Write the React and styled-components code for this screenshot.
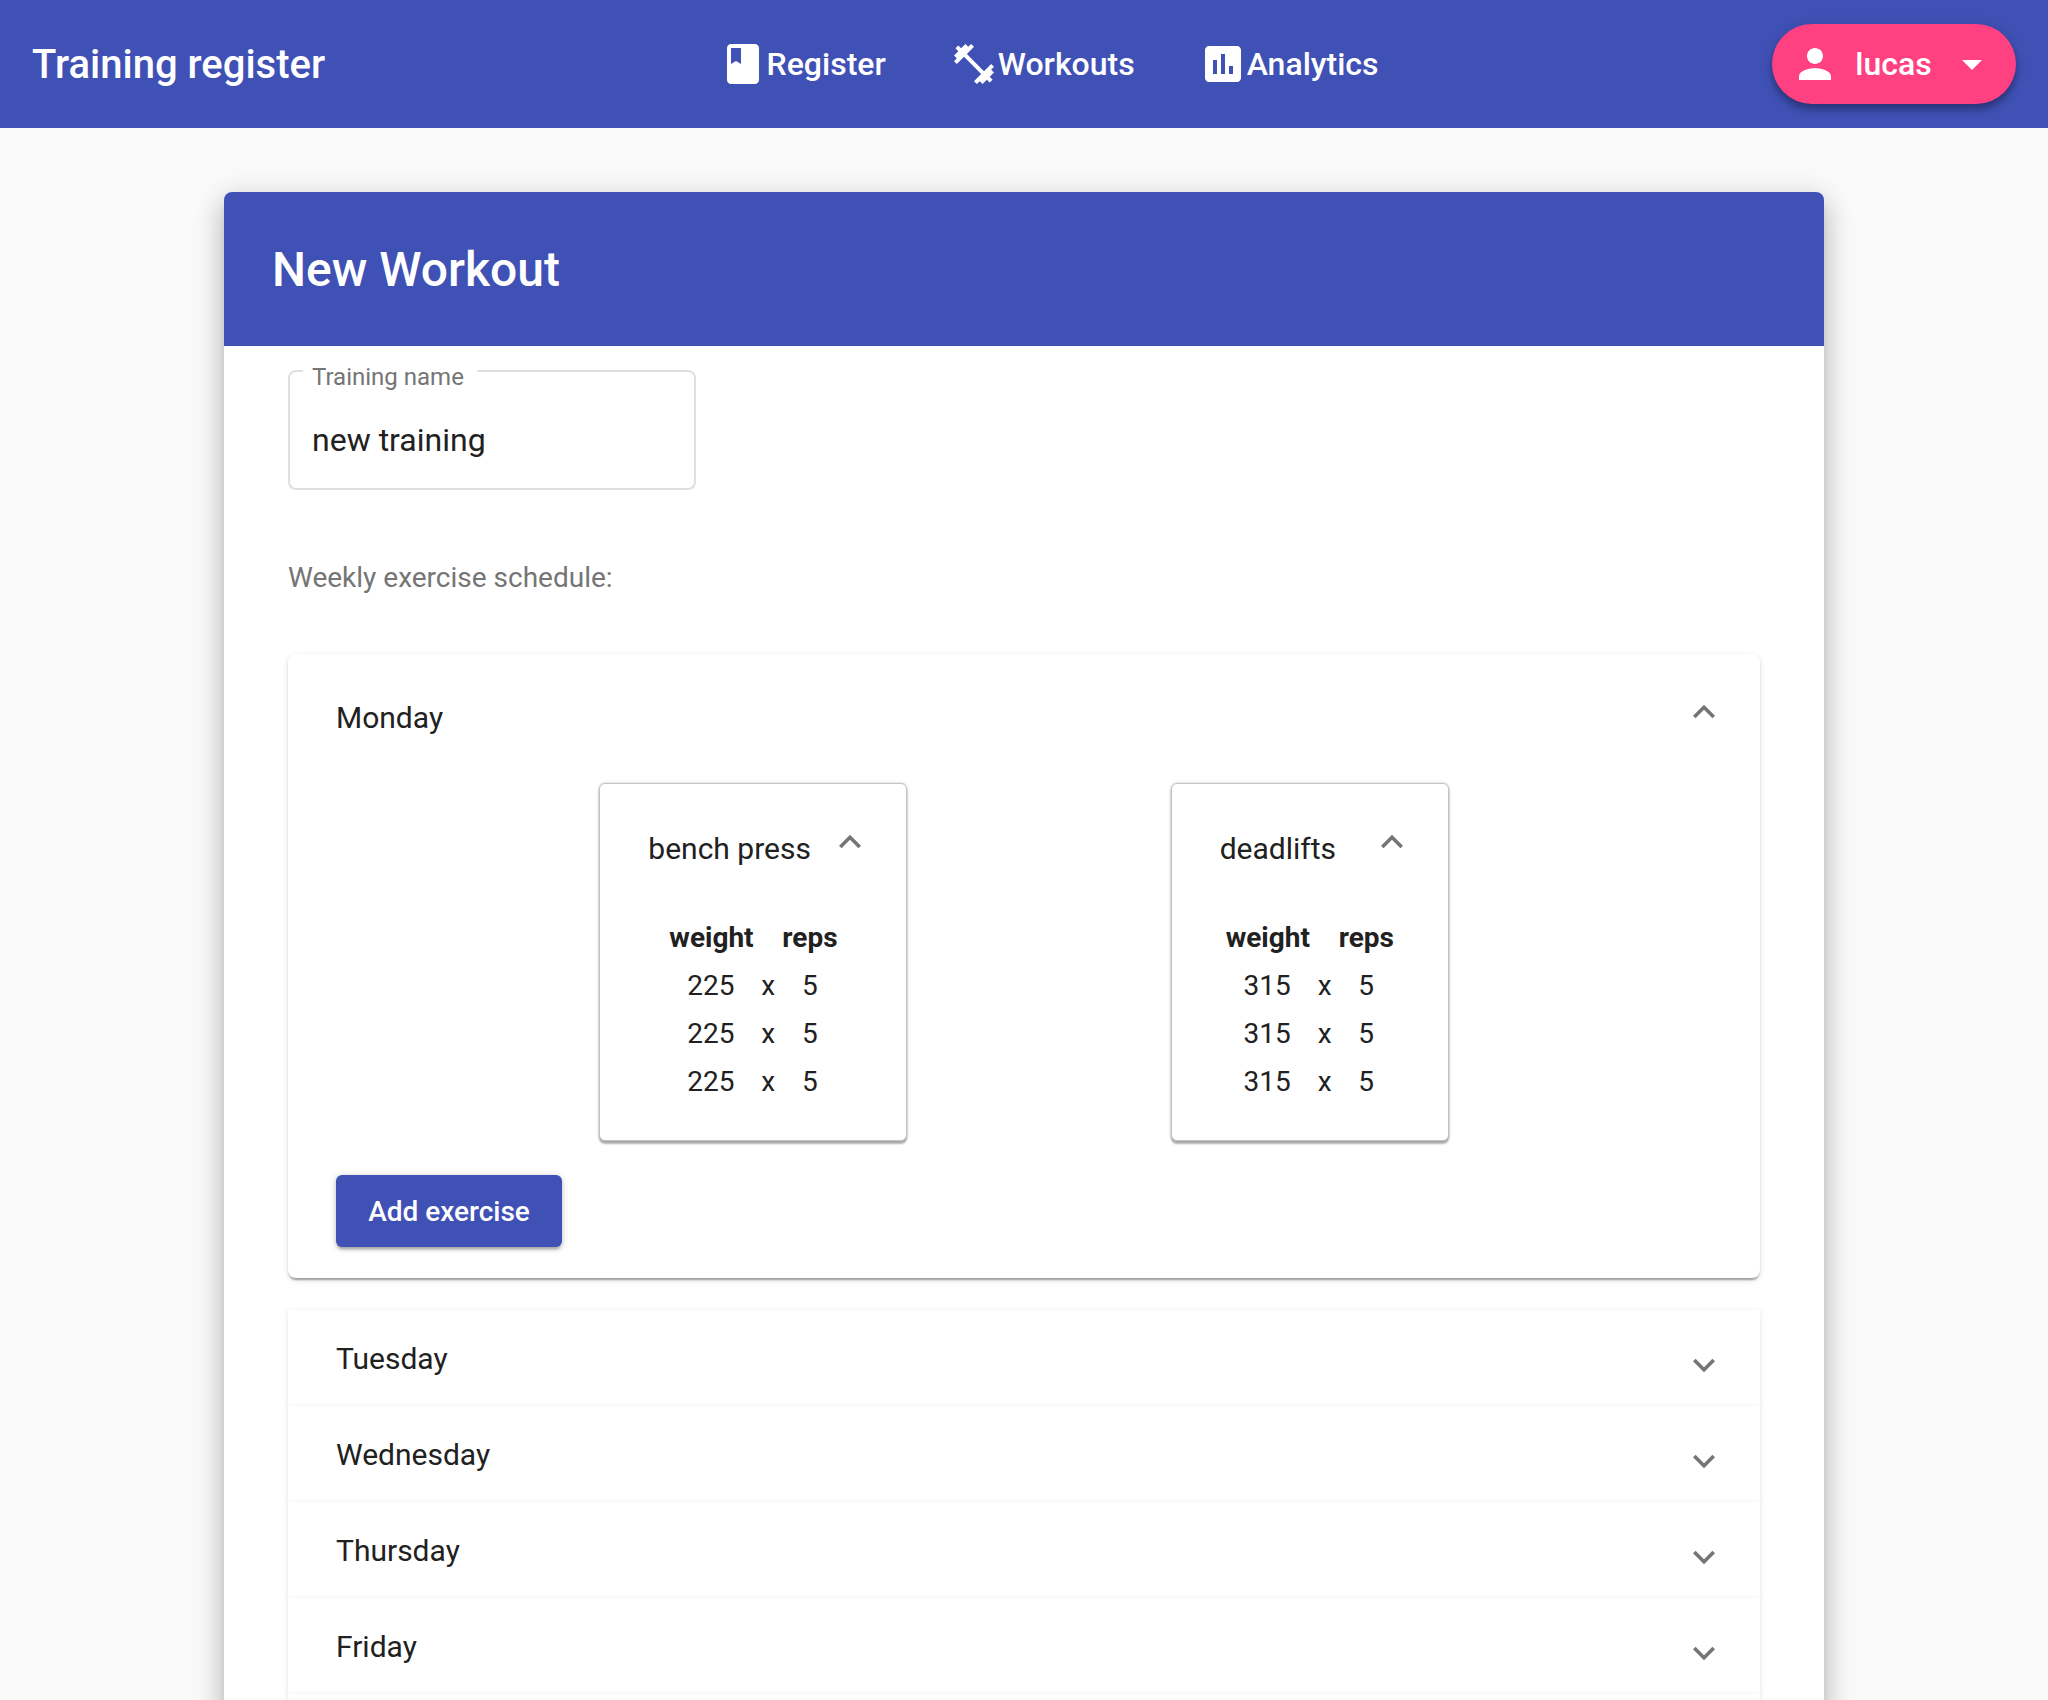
import { Fragment } from "react";
import styled, { createGlobalStyle } from "styled-components";

const GlobalStyle = createGlobalStyle`
  html, body {
    margin: 0;
    height: 100%;
    overflow: hidden;
    background: #fafafa;
    font-family: Roboto, "Liberation Sans", sans-serif;
    color: #212121;
  }
`;

/* --- navbar --- */
const Navbar = styled.header`
  height: 128px;
  padding: 0 32px;
  background: #3f51b5;
  color: #fff;
  display: flex;
  align-items: center;
  justify-content: space-between;
  box-sizing: border-box;
`;

const Brand = styled.div`
  font-size: 40px;
  font-weight: 500;
  line-height: 1;
  padding-top: 2px;
`;

const NavList = styled.nav`
  display: flex;
  align-items: center;
  gap: 64px;
`;

const NavItem = styled.a`
  display: flex;
  align-items: center;
  font-size: 32px;
  font-weight: 500;
  line-height: 48px;
`;

const Icon = styled.svg`
  width: ${(p) => p.$size || 48}px;
  height: ${(p) => p.$size || 48}px;
  fill: ${(p) => p.$color || "currentColor"};
  flex: none;
`;

const UserButton = styled.button`
  width: 244px;
  height: 80px;
  padding: 0 20px 0 19px;
  border: 0;
  border-radius: 40px;
  background: #ff4081;
  color: #fff;
  display: flex;
  align-items: center;
  justify-content: space-between;
  font-family: inherit;
  font-size: 32px;
  font-weight: 500;
  box-shadow: 0 4px 6px -1px rgba(0, 0, 0, 0.2), 0 8px 7px 0 rgba(0, 0, 0, 0.14),
    0 1px 14px 0 rgba(0, 0, 0, 0.12);
`;

/* --- card --- */
const Page = styled.main`
  padding-top: 64px;
`;

const Card = styled.section`
  width: 1600px;
  margin: 0 auto;
  background: #fff;
  border-radius: 8px;
  box-shadow: 0 16px 24px 2px rgba(0, 0, 0, 0.14), 0 6px 30px 5px rgba(0, 0, 0, 0.12),
    0 8px 10px -5px rgba(0, 0, 0, 0.2);
`;

const CardHeader = styled.div`
  height: 154px;
  padding-left: 48px;
  background: #3f51b5;
  border-radius: 8px 8px 0 0;
  color: #fff;
  display: flex;
  align-items: center;
  font-size: 48px;
  font-weight: 500;
`;

const CardBody = styled.div`
  padding: 24px 64px 64px;
`;

const NameField = styled.div`
  position: relative;
  width: 408px;
  height: 120px;
  box-sizing: border-box;
  border: 2px solid #e0e0e0;
  border-radius: 8px;
  padding: 20px 22px 0;
  display: flex;
  align-items: center;
  font-size: 32px;
`;

const NameLabel = styled.span`
  position: absolute;
  left: 13px;
  top: -11px;
  padding: 0 13px 0 9px;
  background: linear-gradient(#fff 12px, transparent 12px);
  font-size: 24px;
  line-height: 32px;
  color: #757575;
`;

const ScheduleLabel = styled.div`
  margin: 70px 0 58px;
  font-size: 28px;
  line-height: 36px;
  color: #757575;
`;

const DayOpen = styled.div`
  background: #fff;
  border-radius: 8px;
  padding-bottom: 31px;
  margin-bottom: 32px;
  box-shadow: 0 2px 6px 0 rgba(0, 0, 0, 0.12), 0 2px 2px 0 rgba(0, 0, 0, 0.14),
    0 4px 2px -2px rgba(0, 0, 0, 0.22);
`;

const DayHead = styled.div`
  height: ${(p) => p.$height}px;
  margin-bottom: ${(p) => p.$gap || 0}px;
  padding: 0 34px 0 48px;
  display: flex;
  align-items: center;
  justify-content: space-between;
  font-size: 30px;
`;

const Chevron = styled(Icon)`
  margin-top: ${(p) => (p.$up ? 0 : 13)}px;
  margin-bottom: ${(p) => (p.$up ? 12 : 0)}px;
`;

const ExerciseRow = styled.div`
  display: flex;
  justify-content: space-evenly;
  margin: 0 48px;
`;

const ExerciseCard = styled.article`
  width: ${(p) => p.$width}px;
  height: 358px;
  box-sizing: border-box;
  background: #fff;
  border-radius: 6px;
  border: 1px solid #c4c4c4;
  box-shadow: 0 0 3px rgba(0, 0, 0, 0.22), 0 3px 2px rgba(0, 0, 0, 0.3);
`;

const ExerciseHead = styled.div`
  height: 128px;
  margin-bottom: 2px;
  padding: 0 34px 0 48px;
  display: flex;
  align-items: center;
  justify-content: space-between;
  font-size: 30px;
`;

const SetTable = styled.div`
  display: grid;
  grid-template-columns: 83px 12px 55px;
  column-gap: 9px;
  justify-content: center;
  grid-auto-rows: 48px;
  font-size: 28px;
  line-height: 48px;
  text-align: center;
`;

const SetHeading = styled.div`
  font-weight: 700;
`;

const AddButton = styled.button`
  display: block;
  width: 226px;
  height: 72px;
  margin: 34px 0 0 48px;
  border: 0;
  border-radius: 6px;
  background: #3f51b5;
  color: #fff;
  font-family: inherit;
  font-size: 28px;
  font-weight: 500;
  box-shadow: 0 1px 7px 0 rgba(0, 0, 0, 0.2), 0 3px 3px 0 rgba(0, 0, 0, 0.14),
    0 4px 2px -2px rgba(0, 0, 0, 0.12);
`;

const DayList = styled.div`
  display: flex;
  flex-direction: column;
`;

const DayRow = styled.div`
  background: #fff;
  box-shadow: 0 1px 6px 0 rgba(0, 0, 0, 0.09), 0 1px 2px 0 rgba(0, 0, 0, 0.04);
`;

const paths = {
  book: "M18 2H6c-1.1 0-2 .9-2 2v16c0 1.1.9 2 2 2h12c1.1 0 2-.9 2-2V4c0-1.1-.9-2-2-2zM6 4h5v8l-2.5-1.5L6 12V4z",
  fitness:
    "M20.57 14.86L22 13.43 20.57 12 17 15.57 8.43 7 12 3.43 10.57 2 9.14 3.43 7.71 2 5.57 4.14 4.14 2.71 2.71 4.14l1.43 1.43L2 7.71l1.43 1.43L2 10.57 3.43 12 7 8.43 15.57 17 12 20.57 13.43 22l1.43-1.43L16.29 22l2.14-2.14 1.43 1.43 1.43-1.43-1.43-1.43L22 16.29z",
  assessment:
    "M19 3H5c-1.1 0-2 .9-2 2v14c0 1.1.9 2 2 2h14c1.1 0 2-.9 2-2V5c0-1.1-.9-2-2-2zM9 17H7v-7h2v7zm4 0h-2V7h2v10zm4 0h-2v-4h2v4z",
  person:
    "M12 12c2.21 0 4-1.79 4-4s-1.79-4-4-4-4 1.79-4 4 1.79 4 4 4zm0 2c-2.67 0-8 1.34-8 4v2h16v-2c0-2.66-5.33-4-8-4z",
  caret: "M7 10l5 5 5-5z",
  down: "M16.59 8.59L12 13.17 7.41 8.59 6 10l6 6 6-6z",
  up: "M12 8l-6 6 1.41 1.41L12 10.83l4.59 4.58L18 14z",
};

const Glyph = ({ name, ...rest }) => (
  <Icon viewBox="0 0 24 24" {...rest}>
    <path d={paths[name]} />
  </Icon>
);

const ChevronGlyph = ({ up }) => (
  <Chevron viewBox="0 0 24 24" $size={44} $color="#757575" $up={up}>
    <path d={up ? paths.up : paths.down} />
  </Chevron>
);

const exercises = [
  { name: "bench press", weight: 225, width: 308 },
  { name: "deadlifts", weight: 315, width: 278 },
];

const closedDays = ["Tuesday", "Wednesday", "Thursday", "Friday", "Saturday", "Sunday"];

export default function App() {
  return (
    <>
      <GlobalStyle />
      <Navbar>
        <Brand>Training register</Brand>
        <NavList>
          <NavItem>
            <Glyph name="book" />
            Register
          </NavItem>
          <NavItem>
            <Glyph name="fitness" />
            Workouts
          </NavItem>
          <NavItem>
            <Glyph name="assessment" />
            Analytics
          </NavItem>
        </NavList>
        <UserButton>
          <Glyph name="person" />
          lucas
          <Glyph name="caret" />
        </UserButton>
      </Navbar>
      <Page>
        <Card>
          <CardHeader>New Workout</CardHeader>
          <CardBody>
            <NameField>
              <NameLabel>Training name</NameLabel>
              new training
            </NameField>
            <ScheduleLabel>Weekly exercise schedule:</ScheduleLabel>
            <DayOpen>
              <DayHead $height={127} $gap={2}>
                Monday
                <ChevronGlyph up />
              </DayHead>
              <ExerciseRow>
                {exercises.map((ex) => (
                  <ExerciseCard key={ex.name} $width={ex.width}>
                    <ExerciseHead>
                      {ex.name}
                      <ChevronGlyph up />
                    </ExerciseHead>
                    <SetTable>
                      <SetHeading>weight</SetHeading>
                      <div />
                      <SetHeading>reps</SetHeading>
                      {[0, 1, 2].map((i) => (
                        <Fragment key={i}>
                          <div>{ex.weight}</div>
                          <div>x</div>
                          <div>5</div>
                        </Fragment>
                      ))}
                    </SetTable>
                  </ExerciseCard>
                ))}
              </ExerciseRow>
              <AddButton>Add exercise</AddButton>
            </DayOpen>
            <DayList>
              {closedDays.map((day) => (
                <DayRow key={day}>
                  <DayHead $height={96}>
                    {day}
                    <ChevronGlyph />
                  </DayHead>
                </DayRow>
              ))}
            </DayList>
          </CardBody>
        </Card>
      </Page>
    </>
  );
}
